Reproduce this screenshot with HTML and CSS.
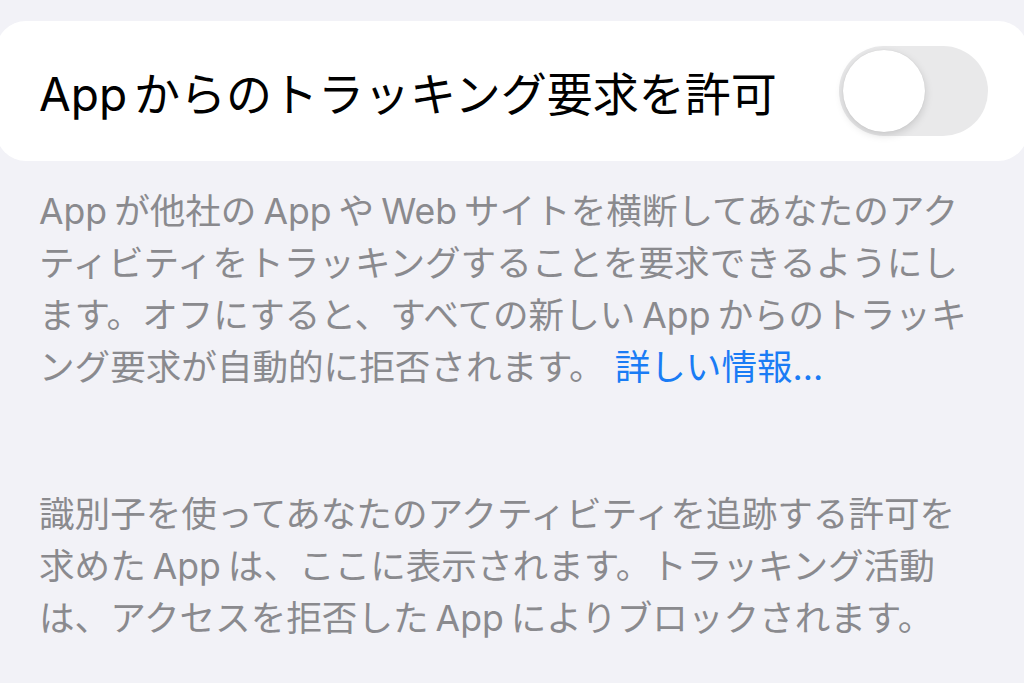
FILE: index.html
```html
<!DOCTYPE html>
<html lang="ja">
<head>
    <meta charset="UTF-8">
    <meta name="viewport" content="width=device-width, initial-scale=1.0">
    <title>トラッキング</title>
    <link rel="stylesheet" href="styles.css">
</head>
<body>
    <div class="screen">
        <div class="card">
            <div class="row">
                <span class="row-label"><span class="latin lead">App</span>からのトラッキング要求を許可</span>
                <div class="switch" role="switch" aria-checked="false">
                    <div class="knob"></div>
                </div>
            </div>
        </div>

        <p class="footer">
            <span class="latin lead">App</span>が他社の<span class="latin">App</span>や<span class="latin">Web</span>サイトを横断してあなたのアク<br>
            ティビティをトラッキングすることを要求できるようにし<br>
            ます。オフにすると、すべての新しい<span class="latin">App</span>からのトラッキ<br>
            ング要求が自動的に拒否されます。 <a class="link" href="#">詳しい情報...</a>
        </p>

        <p class="footer footer-list">
            識別子を使ってあなたのアクティビティを追跡する許可を<br>
            求めた<span class="latin">App</span>は、ここに表示されます。トラッキング活動<br>
            は、アクセスを拒否した<span class="latin">App</span>によりブロックされます。
        </p>
    </div>
</body>
</html>
```

FILE: styles.css
```css
html, body {
    margin: 0;
    padding: 0;
}
body {
    font-family: Inter, "Noto Sans CJK JP", sans-serif;
    background-color: #f2f2f7;
    color: #000;
    overflow: hidden;
}
.screen {
    width: 1024px;
    height: 683px;
    padding-top: 21px;
    box-sizing: border-box;
}
.card {
    margin: 0 -4px;
    background-color: #fff;
    border-radius: 30px;
}
.row {
    height: 140px;
    display: flex;
    align-items: center;
    justify-content: space-between;
    padding: 0 40px 0 43px;
}
.row-label {
    font-size: 46px;
    white-space: nowrap;
}
/* latin words get a little air around them, like iOS does */
.latin {
    margin: 0 7px;
}
.latin.lead {
    margin-left: 0;
}
.switch {
    width: 149px;
    height: 90px;
    border-radius: 45px;
    background-color: #e9e9ea;
    padding: 4px;
    box-sizing: border-box;
    flex-shrink: 0;
}
.knob {
    width: 82px;
    height: 82px;
    border-radius: 50%;
    background-color: #fff;
    box-shadow: 0 3px 8px rgba(0, 0, 0, 0.15), 0 0 1px rgba(0, 0, 0, 0.12);
}
.footer {
    margin: 25px 0 0 0;
    padding-left: 39px;
    font-size: 35.6px;
    line-height: 52px;
    color: #8a8a8e;
    white-space: nowrap;
}
.footer-list {
    margin-top: 95px;
}
.link {
    color: #1a7cf5;
    text-decoration: none;
}
```
